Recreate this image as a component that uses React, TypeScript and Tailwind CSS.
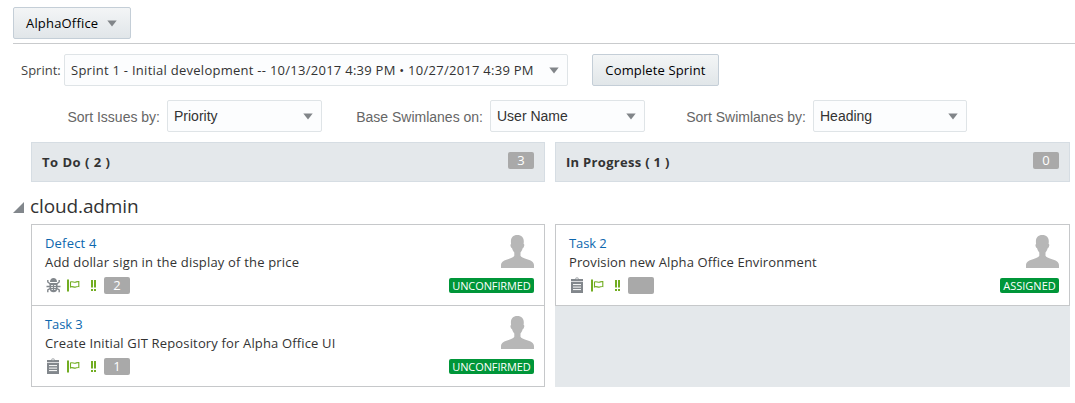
import React from "react";

const sans = "font-['Open_Sans','Noto_Sans',sans-serif]";
const arial = "font-['Liberation_Sans',Arial,sans-serif]";

function Arrow() {
  return (
    <svg className="block shrink-0" width="10" height="7" viewBox="0 0 10 7">
      <path d="M0.3 0.5h9.4L5 6.6z" fill="#818589" />
    </svg>
  );
}

function Bug() {
  return (
    <svg className="block" width="15" height="17" viewBox="0 0 15 17" fill="none" stroke="#82878c">
      <path d="M4 5C4 2.300 5.500 1 7.500 1s3.500 1.300 3.500 4z" fill="#82878c" stroke="none" />
      <path d="M3.500 6h8v5c0 2.700-1.600 4.300-4 4.300s-4-1.600-4-4.300z" fill="#82878c" stroke="none" />
      <path d="M1.800 3v2L4.300 7M13.200 3v2L10.700 7M0.500 9.500H4M11 9.500h3.500M4 11.500l-2.200 1.300v2.400M11 11.500l2.200 1.300v2.400" strokeWidth="1.400" />
      <path d="M5 8.500h2M8 8.500h2M5 10.500h2M8 10.500h2M5.500 12.500h1.500M8 12.500h1.500" stroke="#fff" strokeWidth="0.800" />
    </svg>
  );
}

function Clipboard() {
  return (
    <svg className="block" width="15" height="17" viewBox="0 0 15 17">
      <path d="M4 2.200C4.300.9 5 .3 6 .3s1.700.6 2 1.900z" fill="#b4b7ba" />
      <path d="M0 2h12v2.300H0z" fill="#82878c" />
      <path d="M5.500 1.300h1v1h-1z" fill="#fff" />
      <path d="M0 5h12v11H0z" fill="#82878c" />
      <path d="M2 7.600h8M2 10.100h8M2 12.600h8" stroke="#fff" strokeWidth="1" />
    </svg>
  );
}

function Flag() {
  return (
    <svg className="block" width="13" height="13" viewBox="0 0 13 13" fill="none">
      <path d="M0 0.500h2v12H0z" fill="#72ad22" />
      <path d="M3.500 3c1.800-1 3.300.6 4.800.2 1.200-.3 2.200-.9 3.500-.7v5c-1.400-.2-2.200.4-3.500.6-1.600.3-3-1.100-4.800-.2z" stroke="#72ad22" strokeWidth="1.100" />
    </svg>
  );
}

function Priority() {
  return (
    <svg className="block" width="5" height="11" viewBox="0 0 5 11" fill="#72ad22">
      <path d="M0 0h2v7.500H0zM3 0h2v7.500H3zM0 9h2v2H0zM3 9h2v2H3z" />
    </svg>
  );
}

function Avatar() {
  return (
    <svg className="block" width="33" height="33" viewBox="0 0 33 33">
      <path
        d="M16.300 0c4.200 0 6.500 2.600 6.500 6.500 0 .9-.1 1.700-.2 2.500.9.200.8 1.300.4 2.500-.3.900-.6 1.500-1.200 1.500-.5 1.900-1.300 3.300-2.300 4.400v3.400c.6 1.400 3 2.400 5.800 3.300 4.200 1.300 7.700 2.400 7.700 6.400V33H0v-2.500c0-4 3.500-5.100 7.600-6.400 2.800-.9 5-1.900 5.700-3.300v-3.400c-1-1.100-1.900-2.500-2.300-4.400-.6 0-1-.6-1.300-1.500-.4-1.200-.4-2.300.4-2.500-.1-.8-.2-1.600-.2-2.500C9.900 2.600 12.100 0 16.300 0z"
        fill="#b7b7b7"
      />
    </svg>
  );
}

function Count({ value }: { value?: string }) {
  return (
    <span className={`flex h-[17px] w-[26px] items-center justify-center rounded-[2px] bg-[#a9a9a9] text-[13px] leading-[17px] text-white ${sans}`}>
      {value}
    </span>
  );
}

function Select({ value, width, className }: { value: string; width: string; className: string }) {
  return (
    <div className={`flex h-8 shrink-0 items-center justify-between rounded-[2px] border border-[#dfe4e7] bg-[#fcfdfe] pr-2 pl-[6px] text-[#333] ${width}`}>
      <span className={`whitespace-nowrap ${className}`}>{value}</span>
      <Arrow />
    </div>
  );
}

const buttonStyle =
  "flex h-8 items-center rounded-[2px] border border-[#c4ced7] bg-linear-to-b from-[#f3f5f6] to-[#e1e6e9] whitespace-nowrap text-black";

type Issue = {
  id: string;
  title: string;
  idStyle: string;
  titleStyle: string;
  defect?: boolean;
  points?: string;
  status: string;
  statusStyle: string;
};

function Card({ issue }: { issue: Issue }) {
  return (
    <article className="flex h-[82px] justify-between border border-[#c6c8ca] bg-white pt-[10px] pr-[10px] pl-[13px]">
      <div className="-mt-px whitespace-nowrap">
        <div className={`h-[19px] text-[13px] leading-[18px] text-[#0d67ae] ${issue.idStyle}`}>{issue.id}</div>
        <div className={`h-[24px] text-[13px] leading-[18px] text-[#333] ${issue.titleStyle}`}>{issue.title}</div>
        <div className="flex h-[17px] items-center">
          <span className="ml-[2px] w-5">{issue.defect ? <span className="-ml-px block"><Bug /></span> : <Clipboard />}</span>
          <span className="w-6"><Flag /></span>
          <span className="w-[13px]"><Priority /></span>
          <Count value={issue.points} />
        </div>
      </div>
      <div className="flex flex-col items-end">
        <Avatar />
        <span className={`mt-[10px] flex h-[15px] items-center justify-center rounded-[2px] bg-[#009639] pt-px text-[11px] leading-[14px] whitespace-nowrap text-white ${issue.statusStyle}`}>
          {issue.status}
        </span>
      </div>
    </article>
  );
}

const todo: Issue[] = [
  {
    id: "Defect 4", title: "Add dollar sign in the display of the price", defect: true, points: "2",
    idStyle: "tracking-[0.18px]", titleStyle: "tracking-[0.185px]", status: "UNCONFIRMED", statusStyle: "w-[85px] tracking-[-0.1px]",
  },
  {
    id: "Task 3", title: "Create Initial GIT Repository for Alpha Office UI", points: "1",
    idStyle: "tracking-[-0.1px]", titleStyle: "tracking-[0.155px]", status: "UNCONFIRMED", statusStyle: "w-[85px] tracking-[-0.1px]",
  },
];

const progress: Issue[] = [
  {
    id: "Task 2", title: "Provision new Alpha Office Environment",
    idStyle: "tracking-[-0.1px]", titleStyle: "tracking-[0.12px]", status: "ASSIGNED", statusStyle: "w-[59px]",
  },
];

function ColumnHeader({ title, count, className }: { title: string; count: string; className: string }) {
  return (
    <div className="flex h-10 items-start justify-between border border-[#d6dde3] bg-[#e4e8eb] pt-[9px] pr-[10px] pl-[10px]">
      <h2 className={`text-[13px] leading-[20px] font-bold whitespace-nowrap text-[#333] ${className}`}>{title}</h2>
      <Count value={count} />
    </div>
  );
}

export default function App() {
  return (
    <main className={`h-[403px] w-[1075px] overflow-hidden bg-white ${sans}`}>
      <header className="ml-[13px] h-11 border-b border-[#c9cbcd] pt-[7px]">
        <button className={`w-[118px] justify-between pr-[13px] pl-[12px] text-[13px] ${buttonStyle}`}>
          <span className="pt-[2px] tracking-[0.18px]">AlphaOffice</span>
          <Arrow />
        </button>
      </header>

      <div className="flex h-[56px] items-start pt-[10px] pl-[21px]">
        <label className="w-[43px] text-[13px] leading-8 whitespace-nowrap text-[#444]">Sprint:</label>
        <Select
          value="Sprint 1 - Initial development -- 10/13/2017 4:39 PM • 10/27/2017 4:39 PM"
          width="w-[504px]"
          className="pt-[2px] text-[13px] tracking-[0.265px]"
        />
        <button className={`ml-6 w-[127px] justify-center text-[13px] ${buttonStyle}`}>
          <span className="pt-[2px] tracking-[0.14px]">Complete Sprint</span>
        </button>
      </div>

      <div className={`flex h-[42px] items-start ${arial}`}>
        <label className="w-[167px] pt-px pr-[7px] text-right text-[14px] leading-8 text-[#666]">Sort Issues by:</label>
        <Select value="Priority" width="w-[155px]" className="text-[14px]" />
        <label className="w-[168px] pt-px pr-[7px] text-right text-[14px] leading-8 text-[#666]">Base Swimlanes on:</label>
        <Select value="User Name" width="w-[155px]" className="text-[14px]" />
        <label className="w-[168px] pt-px pr-[7px] text-right text-[14px] leading-8 text-[#666]">Sort Swimlanes by:</label>
        <Select value="Heading" width="w-[154px]" className="text-[14px]" />
      </div>

      <div className="ml-[31px] grid w-[1039px] grid-cols-[514px_515px] gap-x-[10px]">
        <ColumnHeader title="To Do ( 2 )" count="3" className="tracking-[0.5px]" />
        <ColumnHeader title="In Progress ( 1 )" count="0" className="tracking-[0.3px]" />
      </div>

      <div className="flex h-[42px] items-start pl-[13px]">
        <svg className="mt-5 mr-[6px] block" width="11" height="11" viewBox="0 0 11 11">
          <path d="M11 0v11H0z" fill="#82878c" />
        </svg>
        <h1 className="mt-[10px] text-[19px] leading-[28px] tracking-[-0.12px] text-[#333]">cloud.admin</h1>
      </div>

      <section className="ml-[31px] grid h-[163px] w-[1039px] grid-cols-[514px_515px] gap-x-[10px]">
        <div className="flex flex-col -space-y-px bg-[#e4e8eb]">
          {todo.map((issue) => <Card key={issue.id} issue={issue} />)}
        </div>
        <div className="flex flex-col bg-[#e4e8eb]">
          {progress.map((issue) => <Card key={issue.id} issue={issue} />)}
        </div>
      </section>
    </main>
  );
}
